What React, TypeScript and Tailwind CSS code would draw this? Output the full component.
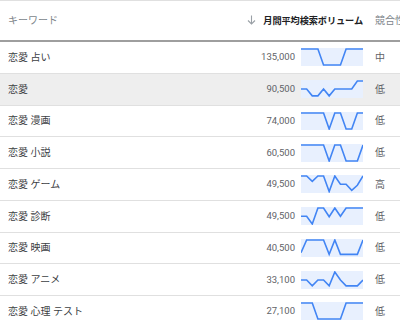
import React from 'react';

type Row = { keyword: string; volume: string; trend: number[]; level: string; hover?: boolean };

const rows: Row[] = [
  { keyword: '恋愛 占い', volume: '135,000', trend: [1, 1, 1, 1, 0, 0, 0, 0, 1, 1, 1, 1], level: '中' },
  { keyword: '恋愛', volume: '90,500', trend: [0.5, 0.5, 0.07, 0.07, 0.5, 0.07, 0.5, 0.5, 0.5, 0.5, 1, 1], level: '低', hover: true },
  { keyword: '恋愛 漫画', volume: '74,000', trend: [1, 1, 1, 1, 1, 0, 1, 1, 0, 0, 1, 1], level: '低' },
  { keyword: '恋愛 小説', volume: '60,500', trend: [1, 1, 1, 1, 1, 0, 1, 1, 0, 0, 0, 1], level: '低' },
  { keyword: '恋愛 ゲーム', volume: '49,500', trend: [1, 1, 0.66, 1, 1, 0.03, 1, 0.48, 0.48, 0.1, 0.42, 1], level: '高' },
  { keyword: '恋愛 診断', volume: '49,500', trend: [0.48, 0.48, 0, 1, 1, 0.45, 1, 0.48, 1, 1, 1, 1], level: '低' },
  { keyword: '恋愛 映画', volume: '40,500', trend: [0.2, 1, 1, 1, 1, 0.1, 1, 0.1, 0.1, 0.1, 0.1, 1], level: '低' },
  { keyword: '恋愛 アニメ', volume: '33,100', trend: [0.5, 0.5, 0.13, 0.5, 0.5, 0.13, 1, 0.5, 0.13, 0.13, 0.13, 0.5], level: '低' },
  { keyword: '恋愛 心理 テスト', volume: '27,100', trend: [1, 1, 1, 0, 0, 0, 0, 0, 1, 1, 1, 1], level: '低' },
];

function Sparkline({ data }: { data: number[] }) {
  const w = 62;
  const h = 18;
  const pts = data
    .map((v, i) => `${((i * w) / (data.length - 1)).toFixed(2)},${(1 + (1 - v) * (h - 2)).toFixed(2)}`)
    .join(' ');
  return (
    <svg width={w} height={h} viewBox={`0 0 ${w} ${h}`} className="block shrink-0">
      <rect x="0" y="0" width={w} height={h} fill="#e8f0fe" />
      <polyline points={pts} fill="none" stroke="#4285f4" strokeWidth="1.6" strokeLinejoin="miter" />
    </svg>
  );
}

export default function App() {
  return (
    <div
      className="w-[400px] h-[323px] overflow-hidden bg-white border-t border-[#e0e0e0]"
      style={{ fontFamily: 'Roboto, "Noto Sans CJK JP", sans-serif' }}
    >
      {/* Header */}
      <div className="flex items-center h-[41px] border-b-2 border-[#9e9e9e] text-[10px] whitespace-nowrap">
        <div className="flex-1 pl-2 text-[#80868b]">キーワード</div>
        <div className="flex items-center justify-end gap-[7px] w-[140px] pr-[12px]">
          <svg width="9" height="10" viewBox="0 0 9 10" className="shrink-0">
            <path d="M4.5 0.5V9M1 5.5L4.5 9L8 5.5" fill="none" stroke="#9aa0a6" strokeWidth="1.1" />
          </svg>
          <span className="font-bold text-[9.2px] tracking-[-0.1px] text-[#202124]">月間平均検索ボリューム</span>
        </div>
        <div className="w-[25px] text-[#80868b] overflow-hidden">競合性</div>
      </div>

      {/* Rows */}
      {rows.map((r) => (
        <div
          key={r.keyword + r.volume}
          className={`flex items-center h-[31.75px] border-b border-[#e0e0e0] text-[10px] whitespace-nowrap ${
            r.hover ? 'bg-[#eeeeee]' : 'bg-white'
          }`}
        >
          <div className="flex-1 pl-2 text-[#3c4043]">{r.keyword}</div>
          <div className="w-[60px] text-right text-[9.5px] text-[#5f6368]">{r.volume}</div>
          <div className="ml-[6px]">
            <Sparkline data={r.trend} />
          </div>
          <div className="ml-[12px] w-[25px] text-[#5f6368]">{r.level}</div>
        </div>
      ))}
    </div>
  );
}
